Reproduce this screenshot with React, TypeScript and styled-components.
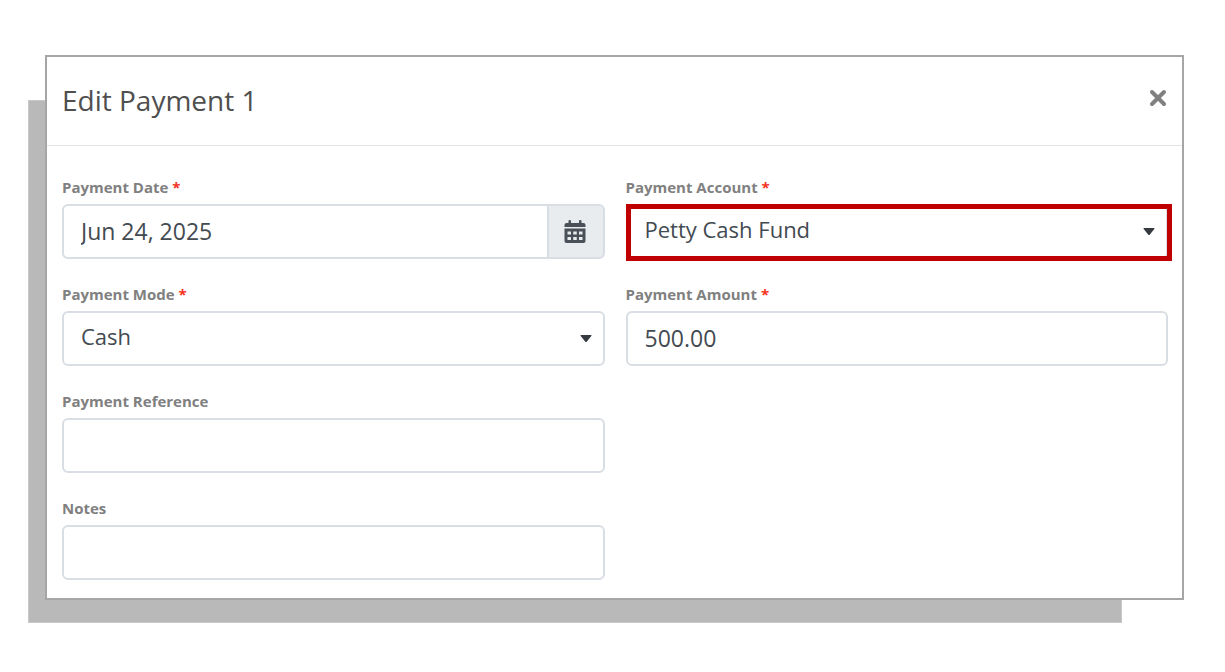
import React, { useState } from "react";
import styled, { createGlobalStyle, css } from "styled-components";

const GlobalStyle = createGlobalStyle`
  *, *::before, *::after { box-sizing: border-box; }
  body {
    margin: 0;
    background: #fff;
    font-family: "Open Sans", "Noto Sans", sans-serif;
  }
`;

const Page = styled.main`
  padding: 55px 41px 48px 45px;
`;

const Stage = styled.div`
  position: relative;

  &::before {
    content: "";
    position: absolute;
    top: 45px;
    right: 62px;
    bottom: -23px;
    left: -17px;
    background: #b9b9b9;
    border: 1px solid #c8c8c8;
  }
`;

const Dialog = styled.section`
  position: relative;
  border: 2px solid #a6a6a6;
  background: #fff;
`;

const Header = styled.header`
  display: flex;
  justify-content: space-between;
  height: 89px;
  padding: 25px 15px 0;
  border-bottom: 1px solid #e5e5e5;
`;

const Title = styled.h1`
  margin: 0;
  color: #4f4f4f;
  font-size: 28px;
  font-weight: 400;
  line-height: 36px;
`;

const CloseButton = styled.button`
  display: flex;
  align-items: center;
  height: 32px;
  padding: 0;
  border: 0;
  background: none;
  color: #808080;
  cursor: pointer;
`;

const Form = styled.form`
  display: grid;
  grid-template-columns: 1fr 1fr;
  gap: 26px 21px;
  padding: 32px 14px 18px 15px;
`;

const Field = styled.div<{ $wide?: boolean }>`
  grid-column: ${(p) => (p.$wide ? "1 / 2" : "auto")};
  display: flex;
  flex-direction: column;
  gap: 8px;
  min-width: 0;
`;

const Label = styled.label`
  color: #808080;
  font-size: 15px;
  font-weight: 700;
  line-height: 18px;
`;

const Required = styled.span`
  color: #f5301b;
`;

const Control = styled.div<{ $highlighted?: boolean }>`
  position: relative;
  display: flex;
  height: 55px;

  ${(p) =>
    p.$highlighted &&
    css`
      &::after {
        content: "";
        position: absolute;
        inset: 0 -4px -2px 0;
        border: 5px solid #c00000;
        pointer-events: none;
      }
    `}
`;

const controlText = css`
  flex: 1;
  width: 100%;
  min-width: 0;
  margin: 0;
  padding: 0 17px 2px;
  border: 2px solid #d9dee4;
  border-radius: 6px;
  outline: 0;
  background: #fff;
  color: #434a51;
  font-family: inherit;
  font-size: 23px;
  line-height: 32px;
`;

const Input = styled.input<{ $joined?: boolean }>`
  ${controlText}
  ${(p) => p.$joined && "border-right: 0; border-radius: 6px 0 0 6px;"}
`;

const Select = styled.select`
  ${controlText}
  padding-bottom: 5px;
  font-size: 22px;
  appearance: none;
`;

const Caret = styled.svg`
  position: absolute;
  top: 24px;
  right: 13px;
  pointer-events: none;
`;

const DateButton = styled.button`
  display: flex;
  align-items: center;
  justify-content: center;
  width: 58px;
  padding: 0 2px 0 0;
  border: 2px solid #d9dee4;
  border-radius: 0 6px 6px 0;
  background: #e9ecef;
  color: #495057;
  cursor: pointer;
`;

function CaretIcon() {
  return (
    <Caret width="12" height="8" viewBox="0 0 12 8" aria-hidden="true">
      <path d="M1 0h10q1 0 .3.900L6.900 6.500q-.9 1-1.800 0L.7.9Q0 0 1 0z" fill="#343a40" />
    </Caret>
  );
}

function CalendarIcon() {
  return (
    <svg width="22" height="24" viewBox="0 0 22 24" fill="currentColor" aria-hidden="true">
      <path d="M4.500 1q0-1 1.250-1T7 1v2h8V1q0-1 1.250-1t1.250 1v2h2a2 2 0 0 1 2 2v2H.5V5a2 2 0 0 1 2-2h2z" />
      <path
        fillRule="evenodd"
        d="M.5 8.500h21v12.500a2 2 0 0 1-2 2h-17a2 2 0 0 1-2-2zM3.500 11.500v3h3.500v-3zM9.250 11.500v3h3.500v-3zM15 11.500v3h3.500v-3zM3.500 17v3h3.500v-3zM9.250 17v3h3.500v-3zM15 17v3h3.500v-3z"
      />
    </svg>
  );
}

function CloseIcon() {
  return (
    <svg width="18" height="18" viewBox="0 0 18 18" aria-hidden="true">
      <path d="M3 3l12 12M15 3L3 15" fill="none" stroke="currentColor" strokeWidth="4" strokeLinecap="round" />
    </svg>
  );
}

interface FieldLabelProps {
  id: string;
  text: string;
  required?: boolean;
}

function FieldLabel({ id, text, required }: FieldLabelProps) {
  return (
    <Label htmlFor={id}>
      {text} {required && <Required>*</Required>}
    </Label>
  );
}

export default function App() {
  const [date, setDate] = useState("Jun 24, 2025");
  const [amount, setAmount] = useState("500.00");

  return (
    <>
      <GlobalStyle />
      <Page>
        <Stage>
          <Dialog role="dialog" aria-labelledby="dialog-title">
            <Header>
              <Title id="dialog-title">Edit Payment 1</Title>
              <CloseButton type="button" aria-label="Close">
                <CloseIcon />
              </CloseButton>
            </Header>
            <Form>
              <Field>
                <FieldLabel id="date" text="Payment Date" required />
                <Control>
                  <Input id="date" $joined value={date} onChange={(e) => setDate(e.target.value)} />
                  <DateButton type="button" aria-label="Choose date">
                    <CalendarIcon />
                  </DateButton>
                </Control>
              </Field>
              <Field>
                <FieldLabel id="account" text="Payment Account" required />
                <Control $highlighted>
                  <Select id="account">
                    <option>Petty Cash Fund</option>
                  </Select>
                  <CaretIcon />
                </Control>
              </Field>
              <Field>
                <FieldLabel id="mode" text="Payment Mode" required />
                <Control>
                  <Select id="mode">
                    <option>Cash</option>
                  </Select>
                  <CaretIcon />
                </Control>
              </Field>
              <Field>
                <FieldLabel id="amount" text="Payment Amount" required />
                <Control>
                  <Input id="amount" value={amount} onChange={(e) => setAmount(e.target.value)} />
                </Control>
              </Field>
              <Field $wide>
                <FieldLabel id="reference" text="Payment Reference" />
                <Control>
                  <Input id="reference" />
                </Control>
              </Field>
              <Field $wide>
                <FieldLabel id="notes" text="Notes" />
                <Control>
                  <Input id="notes" />
                </Control>
              </Field>
            </Form>
          </Dialog>
        </Stage>
      </Page>
    </>
  );
}
